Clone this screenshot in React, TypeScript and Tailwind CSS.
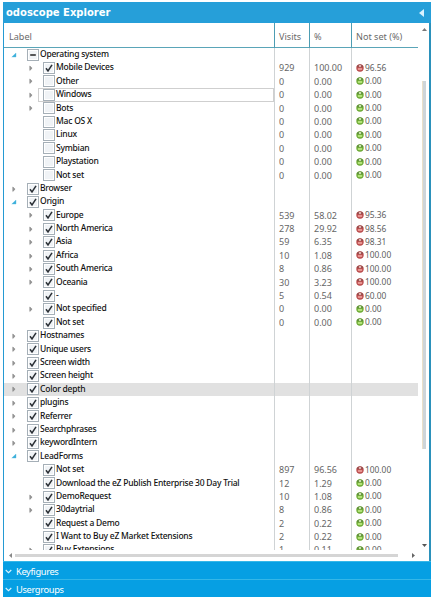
type Row = {
  label: string;
  depth: 0 | 1;
  arrow?: 'open' | 'closed';
  check: 'on' | 'off' | 'mixed';
  visits?: string;
  pct?: string;
  notSet?: string;
  state?: 'focused' | 'hover';
};

const group = (label: string, arrow: 'open' | 'closed' = 'closed', check: Row['check'] = 'on', state?: Row['state']): Row => ({
  label, depth: 0, arrow, check, state,
});
const item = (
  label: string, visits: string, pct: string, notSet: string,
  expandable = true, check: Row['check'] = 'on', state?: Row['state'],
): Row => ({ label, depth: 1, arrow: expandable ? 'closed' : undefined, check, visits, pct, notSet, state });

const rows: Row[] = [
  group('Operating system', 'open', 'mixed'),
  item('Mobile Devices', '929', '100.00', '96.56'),
  item('Other', '0', '0.00', '0.00', true, 'off'),
  item('Windows', '0', '0.00', '0.00', true, 'off', 'focused'),
  item('Bots', '0', '0.00', '0.00', true, 'off'),
  item('Mac OS X', '0', '0.00', '0.00', false, 'off'),
  item('Linux', '0', '0.00', '0.00', false, 'off'),
  item('Symbian', '0', '0.00', '0.00', false, 'off'),
  item('Playstation', '0', '0.00', '0.00', false, 'off'),
  item('Not set', '0', '0.00', '0.00', false, 'off'),
  group('Browser'),
  group('Origin', 'open'),
  item('Europe', '539', '58.02', '95.36'),
  item('North America', '278', '29.92', '98.56'),
  item('Asia', '59', '6.35', '98.31'),
  item('Africa', '10', '1.08', '100.00'),
  item('South America', '8', '0.86', '100.00'),
  item('Oceania', '30', '3.23', '100.00'),
  item('-', '5', '0.54', '60.00', false),
  item('Not specified', '0', '0.00', '0.00'),
  item('Not set', '0', '0.00', '0.00', false),
  group('Hostnames'),
  group('Unique users'),
  group('Screen width'),
  group('Screen height'),
  group('Color depth', 'closed', 'on', 'hover'),
  group('plugins'),
  group('Referrer'),
  group('Searchphrases'),
  group('keywordIntern'),
  group('LeadForms', 'open'),
  item('Not set', '897', '96.56', '100.00', false),
  item('Download the eZ Publish Enterprise 30 Day Trial', '12', '1.29', '0.00', false),
  item('DemoRequest', '10', '1.08', '0.00'),
  item('30daytrial', '8', '0.86', '0.00'),
  item('Request a Demo', '2', '0.22', '0.00', false),
  item('I Want to Buy eZ Market Extensions', '2', '0.22', '0.00', false),
  item('Buy Extensions', '1', '0.11', '0.00'),
];

function Expander({ kind }: { kind?: 'open' | 'closed' }) {
  return (
    <svg className="h-[8px] w-[6px] shrink-0 self-center" viewBox="0 0 6 8">
      {kind === 'open' && <path d="M5 2v4H.8z" fill="#38aeda" stroke="#5bbce0" strokeWidth=".4" />}
      {kind === 'closed' && <path d="M1.8 2v4.4L4.1 4.2z" fill="#999" stroke="#808080" strokeWidth=".6" />}
    </svg>
  );
}

function Checkbox({ value }: { value: Row['check'] }) {
  return (
    <svg className="h-[12px] w-[12px] shrink-0" viewBox="0 0 12 12">
      <rect x=".5" y=".5" width="11" height="11" fill="#fff" stroke="#a5afb7" />
      <rect x="2" y="2" width="8" height="8" fill="#f0f3f6" />
      {value === 'on' && <path d="M3 6.3 5 9 9 2.8" fill="none" stroke="#2b3036" strokeWidth="1.5" />}
      {value === 'mixed' && <path d="M3.2 6h5.6" stroke="#222" strokeWidth="1.5" />}
    </svg>
  );
}

function Light({ value }: { value: string }) {
  const red = parseFloat(value) > 50;
  return (
    <svg className="h-[8px] w-[8px] shrink-0" viewBox="0 0 8 8">
      <circle cx="4" cy="4" r="3.7" fill={red ? '#b8494a' : '#6ba833'} />
      <path d="M.8 2.6A3.5 3.5 0 0 1 7.2 2.6L4 3.6z" fill={red ? '#8c4a48' : '#5a873b'} />
      <ellipse cx="4" cy="2.1" rx="1.3" ry="1" fill={red ? '#eec0bd' : '#d9efbb'} />
      <ellipse cx="4" cy="5" rx="2.5" ry="1.3" fill={red ? '#e79490' : '#b2e278'} />
    </svg>
  );
}

const columns = 'grid grid-cols-[271px_35px_42px_66px]';

function TreeRow({ row }: { row: Row }) {
  return (
    <div className={`${columns} h-[13.4px] shrink-0 ${row.state === 'hover' ? 'bg-[#e1e1e1]' : ''}`}>
      <div className={`flex h-[13.4px] border-r border-[#cfd3d5] ${row.depth ? 'pl-[24px]' : 'pl-[7px]'}`}>
        <Expander kind={row.arrow} />
        <div
          className={`flex grow items-center ${row.depth ? 'ml-[4px] pl-[5px]' : 'ml-[10px]'} ${row.state === 'focused' ? 'outline -outline-offset-1 outline-[#cfcfcf]' : ''}`}
        >
          <Checkbox value={row.check} />
          <span className="ml-px whitespace-nowrap pb-[2.4px] text-[8.5px] leading-[13px] font-medium tracking-[-0.23px] text-[#111]">
            {row.label}
          </span>
        </div>
      </div>
      <div className="border-r border-[#cfd3d5] pl-[4px] text-[9px] leading-[14px] text-[#666]">{row.visits}</div>
      <div className="border-r border-[#cfd3d5] pl-[4px] text-[9px] leading-[14px] text-[#666]">{row.pct}</div>
      <div className="flex items-center gap-px pb-[1px] pl-[4px] text-[8.4px] leading-[12px] text-[#606060]">
        {row.notSet && <Light value={row.notSet} />}
        <span>{row.notSet}</span>
      </div>
    </div>
  );
}

function AccordionBar({ title }: { title: string }) {
  return (
    <div className="flex h-[18px] items-center border-t border-[#35b7e8] bg-[#069fe3] pt-[2px] pl-[2px] text-[9.3px] leading-[14px] tracking-[-0.35px] text-white">
      <svg className="mr-[4px] h-[7px] w-[7px]" viewBox="0 0 7 7">
        <path d="M.7 2 3.5 4.7 6.3 2" fill="none" stroke="#d9f4ff" strokeWidth="1.1" />
      </svg>
      {title}
    </div>
  );
}

export default function App() {
  return (
    <div className="h-[600px] w-[434px] overflow-hidden bg-white pt-[2px] pl-[3px] font-['Noto_Sans','Open_Sans',sans-serif]">
      <div className="flex h-[596px] w-[428px] flex-col">
        <header className="flex h-[21px] shrink-0 items-center justify-between bg-[#269fd9] pr-[7px] pl-[3px]">
          <h1 className="[font-family:'DejaVu_Sans',Verdana,sans-serif] text-[10px] leading-[18px] font-bold text-white">odoscope Explorer</h1>
          <svg className="h-[8px] w-[5px]" viewBox="0 0 5 8">
            <path d="M5 0v8L0 4z" fill="#d9f2ff" />
          </svg>
        </header>
        <div className="flex h-[538px] shrink-0 flex-col border-r-2 border-l border-r-[#2b91bb] border-l-[#249ad3]">
          <div className="flex h-[526.5px]">
            <div className="flex w-[414px] shrink-0 flex-col">
              <div className={`${columns} h-[25px] shrink-0 border-b border-[#5aa5b8] text-[9.1px] leading-[28px] text-[#6a6a6a]`}>
                <div className="border-r border-[#4d9db3] pl-[5px]">Label</div>
                <div className="border-r border-[#4d9db3] pl-[4px]">Visits</div>
                <div className="border-r border-[#4d9db3] pl-[4px]">%</div>
                <div className="pl-[4px]">Not set (%)</div>
              </div>
              <div className="flex grow flex-col overflow-hidden">
                {rows.map((row, i) => (
                  <TreeRow key={i} row={row} />
                ))}
              </div>
            </div>
            <div className="flex grow flex-col items-center pt-[5px] pl-px">
              <svg className="h-[3px] w-[5px] shrink-0" viewBox="0 0 5 3">
                <path d="M0 3h5L2.5 0z" fill="#777" />
              </svg>
              <div className="mt-[50px] h-[368px] w-[4px] shrink-0 border-l border-[#eadfc9] bg-[#ced5d9]" />
              <svg className="mt-[95px] h-[3px] w-[5px] shrink-0" viewBox="0 0 5 3">
                <path d="M0 0h5L2.5 3z" fill="#555" />
              </svg>
            </div>
          </div>
          <div className="flex grow items-start pt-[3px] pl-[5px]">
            <svg className="h-[5px] w-[3px]" viewBox="0 0 3 5">
              <path d="M3 0v5L0 2.5z" fill="#888" />
            </svg>
            <div className="ml-[3px] mt-px h-[3px] w-[383px] bg-[#d5d5d5]" />
            <svg className="ml-[14px] h-[5px] w-[3px]" viewBox="0 0 3 5">
              <path d="M0 0v5l3-2.5z" fill="#666" />
            </svg>
          </div>
        </div>
        <AccordionBar title="Keyfigures" />
        <AccordionBar title="Usergroups" />
      </div>
    </div>
  );
}
